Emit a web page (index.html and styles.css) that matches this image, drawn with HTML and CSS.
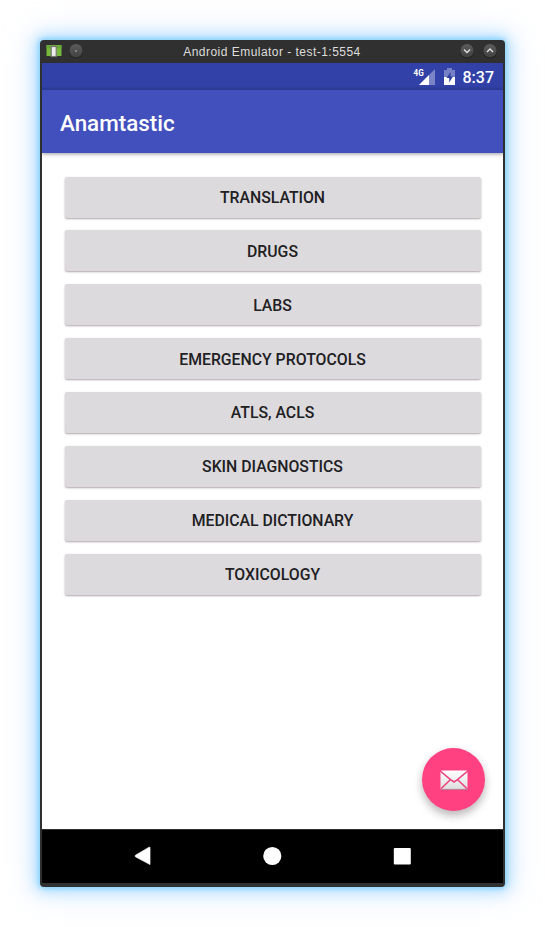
FILE: index.html
```html
<!DOCTYPE html>
<html lang="en">
<head>
<meta charset="utf-8">
<title>Android Emulator</title>
<link rel="stylesheet" href="styles.css">
</head>
<body>
<div class="window">
  <header class="titlebar">
    <svg class="app-icon" width="16" height="14" viewBox="0 0 16 14"><rect x=".5" y="1" width="15" height="11" fill="#78b83c"/><rect y="1.5" x=".5" width="15" height="3" fill="#69a638"/><rect x="5.2" y="2.5" width="5" height="10" fill="#eee" stroke="#77776f" stroke-width="1.2"/></svg>
    <svg class="pin" width="16" height="16" viewBox="0 0 16 16"><use href="#knob"/><circle cx="8" cy="8" r=".7" fill="#ddd"/></svg>
    <span class="caption">Android Emulator - test-1:5554</span>
    <svg class="minimize" width="16" height="16" viewBox="0 0 16 16"><defs><linearGradient id="shade" x2="0" y2="1"><stop stop-color="#5c5c5c"/><stop offset="1" stop-color="#424141"/></linearGradient><g id="knob"><circle cx="8" cy="8.4" r="7" fill="#1e1e1e"/><circle cx="8" cy="7.8" r="6.7" fill="url(#shade)"/></g></defs><use href="#knob"/><path d="M5 6.5l3 3 3-3" fill="none" stroke="#e2e2e2" stroke-width="1.4"/></svg>
    <svg class="maximize" width="16" height="16" viewBox="0 0 16 16"><use href="#knob"/><path d="M5 9l3-3 3 3" fill="none" stroke="#e2e2e2" stroke-width="1.4"/></svg>
  </header>
  <div class="screen">
    <div class="status">
      <span class="network">4G</span>
      <svg class="signal" width="16" height="16" viewBox="0 0 16 16"><path d="M16 0v16H0z" fill="#7b84c7"/><path d="M10 6v10H0z" fill="#fff"/></svg>
      <svg class="battery" width="11" height="17" viewBox="0 0 11 17"><path d="M3 0h5v2h3v7H0V2h3z" fill="#7580c5"/><path d="M0 9h11v8H0z" fill="#fff"/><path d="M6.5 4L2.5 10h2.7v4.5L9 8.4H6.5z" fill="#303f9f"/></svg>
      <span class="clock">8:37</span>
    </div>
    <div class="appbar"><h1>Anamtastic</h1></div>
    <main class="content">
      <button>TRANSLATION</button>
      <button>DRUGS</button>
      <button>LABS</button>
      <button>EMERGENCY PROTOCOLS</button>
      <button>ATLS, ACLS</button>
      <button>SKIN DIAGNOSTICS</button>
      <button>MEDICAL DICTIONARY</button>
      <button>TOXICOLOGY</button>
      <a class="fab">
        <svg width="28" height="20" viewBox="0 0 28 20"><defs><linearGradient id="paper" x2="0" y2="1"><stop stop-color="#fff"/><stop offset="1" stop-color="#ddd"/></linearGradient></defs><rect x=".5" y=".5" width="27" height="19" rx="1" fill="url(#paper)"/><path d="M0 .8l10.5 8.8L14 12l3.5-2.4L28 .8M1 18.8l9.3-9M27 18.8l-9.3-9" fill="none" stroke="#ed4380" stroke-width="1.6"/><path d="M1 19.4h26" stroke="#a77d8c" stroke-width=".8"/></svg>
      </a>
    </main>
    <nav class="navbar">
      <svg width="18" height="20" viewBox="0 0 18 20"><path d="M16 1.5v17L1.5 10.8q-1-.8 0-1.6L15.5 1z" fill="#fff" stroke="#fff" stroke-width=".7" stroke-linejoin="round"/></svg>
      <svg width="20" height="20" viewBox="0 0 20 20"><circle cx="10.3" cy="10" r="9.1" fill="#fff"/></svg>
      <svg width="20" height="20" viewBox="0 0 20 20"><rect x="1.8" y="2" width="17" height="16.6" rx="1" fill="#fff"/></svg>
    </nav>
  </div>
</div>
</body>
</html>
```
FILE: styles.css
```css
* { box-sizing: border-box; }
body {
  margin: 0;
  padding: 40px;
  height: 927px;
  background: #fff;
  font-family: Roboto, sans-serif;
  overflow: hidden;
}
svg { display: block; flex: none; }
.window {
  width: 465px;
  height: 847px;
  padding: 0 2px 4px;
  background: #303030;
  border-radius: 4px;
  box-shadow: 0 0 5px 1px #7fd0f8, 0 0 14px 4px rgba(125, 202, 255, .6), 0 0 30px 8px rgba(165, 205, 255, .35);
}
.titlebar {
  display: flex;
  align-items: center;
  height: 23px;
  padding: 0 5px 2px 4px;
}
.app-icon { margin-top: 1px; }
.pin { margin-left: 6px; }
.caption {
  flex: 1;
  padding: 3px 0 0 1px;
  text-align: center;
  font: 12px/16px "Liberation Sans", sans-serif;
  letter-spacing: .47px;
  color: #dedddd;
  white-space: nowrap;
}
.maximize { margin-left: 7px; }
.screen {
  display: flex;
  flex-direction: column;
  height: 820px;
  background: #fff;
}
.status {
  display: flex;
  align-items: center;
  justify-content: flex-end;
  height: 27px;
  padding-right: 9px;
  background: linear-gradient(#3241a8 0, #3241a8 85%, #2a3791);
  color: #fff;
}
.network {
  align-self: flex-start;
  margin: 5px -6px 0 0;
  font-size: 9px;
  line-height: 10px;
  font-weight: 700;
  transform: scaleX(.9);
}
.signal { margin-right: 9px; }
.battery { margin-right: 8px; }
.clock {
  font-size: 16px;
  font-weight: 500;
  line-height: 27px;
  padding-top: 1px;
}
.appbar {
  position: relative;
  display: flex;
  align-items: center;
  height: 63px;
  padding: 2px 0 0 18px;
  background: #4250bd;
  box-shadow: 0 1px 4px rgba(0, 0, 0, .4);
  clip-path: inset(0 0 -8px 0);
}
.appbar h1 {
  margin: 0;
  color: #fff;
  font-size: 22.4px;
  font-weight: 500;
}
.content {
  position: relative;
  flex: 1;
  display: flex;
  flex-direction: column;
  gap: 12.86px;
  padding: 23.5px 22.5px 0 22.5px;
}
.content button {
  flex: none;
  height: 41px;
  padding: 2px 0 0;
  border: 0;
  border-radius: 2px;
  background: #dcdadd;
  color: #212023;
  font: 500 15.8px/20px Roboto, sans-serif;
  box-shadow: 0 1px 2px rgba(55, 30, 45, .4);
}
.fab {
  position: absolute;
  right: 18px;
  bottom: 18px;
  display: grid;
  place-items: center;
  width: 63px;
  height: 63px;
  border-radius: 50%;
  background: #ff4081;
  box-shadow: 0 5px 8px rgba(40, 20, 30, .28), 0 1px 10px rgba(60, 20, 40, .06);
}
.navbar {
  display: flex;
  align-items: center;
  justify-content: space-between;
  height: 54px;
  padding: 0 91px 1px 92px;
  border-top: 1px solid #2d2d2d;
  background: #000;
}
```
